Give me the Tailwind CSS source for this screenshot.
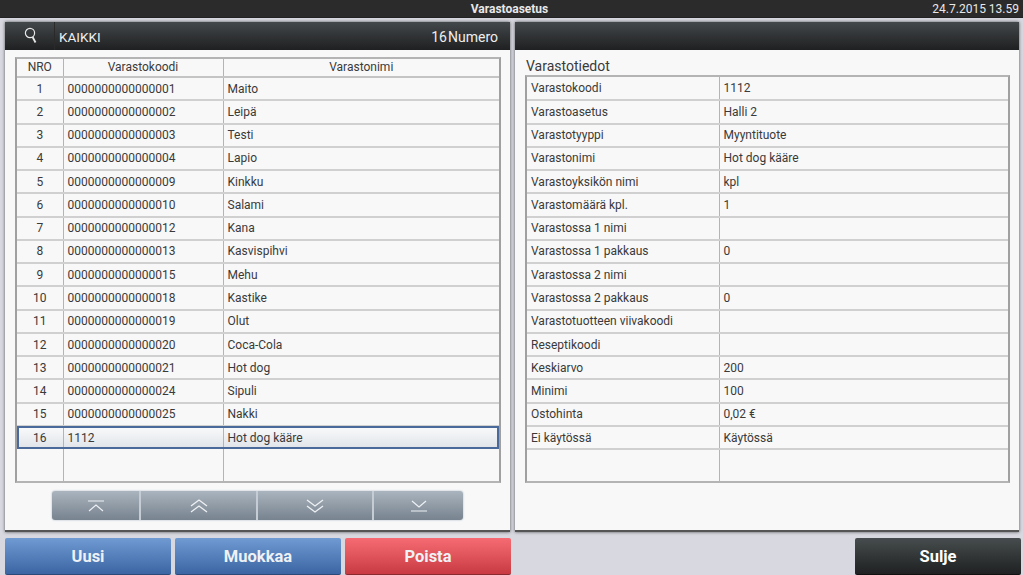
<!DOCTYPE html>
<html lang="fi">
  <head>
    <meta charset="UTF-8" />
    <title>Varastoasetus</title>
    <script src="https://cdn.jsdelivr.net/npm/@tailwindcss/browser@4"></script>
  </head>
  <body class="w-[1023px] h-[575px] overflow-hidden bg-[#d7d8e0] font-['Roboto',sans-serif] text-[#3a3a3a]">
    <header class="h-[18px] bg-[#2b2b2b] border-b border-[#222] grid grid-cols-[1fr_auto_1fr] items-center text-[12px] text-[#e8e8e8]">
      <span></span>
      <span class="font-bold -translate-x-[2px]">Varastoasetus</span>
      <span class="text-right pr-1">24.7.2015 13.59</span>
    </header>

    <main class="flex gap-[5px] pl-[5px] pt-[4px] h-[514px]">
      <!-- list -->
      <section class="w-[505px] h-[510px] bg-[#f8f8f8] border-b-2 border-b-[#555] shadow-[0_0_3px_#555] flex flex-col">
        <div class="h-[28px] shrink-0 bg-gradient-to-b from-[#43484a] to-[#1f2021] flex items-center text-[13.5px] text-[#eee]">
          <div class="w-[50px] h-full flex justify-center items-start pt-[5px] pl-[2px] border-r border-[#2a2a2a]">
            <svg width="14" height="17" viewBox="0 0 14 17" fill="none" stroke="#e8e8e8">
              <circle cx="6" cy="6" r="4.6" stroke-width="1.2" />
              <path d="M8.6 10 L11.5 15.5" stroke-width="1.8" />
            </svg>
          </div>
          <span class="ml-[4px] pt-[3px]">KAIKKI</span>
          <span class="ml-auto mr-[12px] pt-[3px] text-[14px]"><span class="mr-[1px]">16</span>Numero</span>
        </div>

        <div class="ml-[10px] mt-[7px] w-[486px] h-[426px] border-2 border-[#b4b4b4] border-x-[#a0a0a0] overflow-hidden">
          <table class="w-full table-fixed border-collapse text-[12px]">
            <colgroup><col class="w-[46px]" /><col class="w-[160px]" /><col /></colgroup>
            <thead>
              <tr class="border-b-2 border-[#c4c4c4] text-center leading-[17px]">
                <th class="font-normal border-r border-[#b4b4b4]">NRO</th>
                <th class="font-normal border-r border-[#b4b4b4]">Varastokoodi</th>
                <th class="font-normal">Varastonimi</th>
              </tr>
            </thead>
            <tbody id="list"></tbody>
          </table>
        </div>

        <div class="ml-[47px] mt-[8px] w-[411px] h-[29px] rounded-[3px] bg-gradient-to-b from-[#aab4be] to-[#77838f] flex shadow-[0_0_2px_#9fb0c0]">
          <button class="w-[89px] flex items-center justify-center border-r-2 border-[#c5ccd3]">
            <svg width="18" height="12" viewBox="0 0 18 12" fill="none" stroke="#eef1f4" stroke-width="1.2"><path d="M1 1H17M2 11L9 5L16 11" /></svg>
          </button>
          <button class="w-[117px] flex items-center justify-center border-r-2 border-[#c5ccd3]">
            <svg width="18" height="14" viewBox="0 0 18 14" fill="none" stroke="#eef1f4" stroke-width="1.3"><path d="M1 7L9 1L17 7M1 13L9 7L17 13" /></svg>
          </button>
          <button class="w-[116px] flex items-center justify-center border-r-2 border-[#c5ccd3]">
            <svg width="18" height="14" viewBox="0 0 18 14" fill="none" stroke="#eef1f4" stroke-width="1.3"><path d="M1 1L9 7L17 1M1 7L9 13L17 7" /></svg>
          </button>
          <button class="flex-1 flex items-center justify-center">
            <svg width="18" height="12" viewBox="0 0 18 12" fill="none" stroke="#eef1f4" stroke-width="1.2"><path d="M2 1L9 7L16 1M1 11H17" /></svg>
          </button>
        </div>
      </section>

      <!-- details -->
      <section class="w-[504px] h-[510px] bg-[#f8f8f8] border-b-2 border-b-[#555] shadow-[0_0_3px_#555] flex flex-col">
        <div class="h-[28px] shrink-0 bg-gradient-to-b from-[#43484a] to-[#1f2021]"></div>
        <h2 class="ml-[11px] mt-[8px] h-[17px] text-[14px] leading-[17px]">Varastotiedot</h2>
        <div class="ml-[10px] h-[408px] w-[485px] border-2 border-[#b4b4b4] border-x-[#a0a0a0] overflow-hidden">
          <table class="w-full table-fixed border-collapse text-[12px]">
            <colgroup><col class="w-[192px]" /><col /></colgroup>
            <tbody id="details"></tbody>
          </table>
        </div>
      </section>
    </main>

    <footer class="flex pl-[5px] pr-[2px] gap-[4px] mt-[6px] h-[37px] text-[16.5px] font-bold text-[#eef1f5]">
      <button class="w-[166px] pt-[2px] rounded-[2px] border-b border-[#2c4a78] bg-gradient-to-b from-[#6f9ad2] to-[#3c66a3]">Uusi</button>
      <button class="w-[166px] pt-[2px] rounded-[2px] border-b border-[#2c4a78] bg-gradient-to-b from-[#6f9ad2] to-[#3c66a3]">Muokkaa</button>
      <button class="w-[166px] pt-[2px] rounded-[2px] border-b border-[#8a2a30] bg-gradient-to-b from-[#f66b73] to-[#c93a42]">Poista</button>
      <button class="ml-auto w-[166px] pt-[2px] rounded-[2px] border-b border-[#111] bg-gradient-to-b from-[#474d4e] to-[#1f2122] text-white">Sulje</button>
    </footer>

    <script>
      const items = [
        ["0000000000000001", "Maito"], ["0000000000000002", "Leipä"], ["0000000000000003", "Testi"],
        ["0000000000000004", "Lapio"], ["0000000000000009", "Kinkku"], ["0000000000000010", "Salami"],
        ["0000000000000012", "Kana"], ["0000000000000013", "Kasvispihvi"], ["0000000000000015", "Mehu"],
        ["0000000000000018", "Kastike"], ["0000000000000019", "Olut"], ["0000000000000020", "Coca-Cola"],
        ["0000000000000021", "Hot dog"], ["0000000000000024", "Sipuli"], ["0000000000000025", "Nakki"],
        ["1112", "Hot dog kääre"],
      ];
      const info = [
        ["Varastokoodi", "1112"], ["Varastoasetus", "Halli 2"], ["Varastotyyppi", "Myyntituote"],
        ["Varastonimi", "Hot dog kääre"], ["Varastoyksikön nimi", "kpl"], ["Varastomäärä kpl.", "1"],
        ["Varastossa 1 nimi", ""], ["Varastossa 1 pakkaus", "0"], ["Varastossa 2 nimi", ""],
        ["Varastossa 2 pakkaus", "0"], ["Varastotuotteen viivakoodi", ""], ["Reseptikoodi", ""],
        ["Keskiarvo", "200"], ["Minimi", "100"], ["Ostohinta", "0,02 €"], ["Ei käytössä", "Käytössä"],
      ];

      document.getElementById("list").innerHTML = items.map((it, i) => {
        const selected = i === items.length - 1;
        const rowClass = selected
          ? "h-[23.27px] bg-gradient-to-b from-[#fafbfc] to-[#dfe3e8] outline-2 -outline-offset-2 outline-[#4a6a9c]"
          : "h-[23.27px] border-b-2 border-[#d0d0d0]";
        return `<tr class="${rowClass}">
          <td class="text-center border-r border-[#b4b4b4]">${i + 1}</td>
          <td class="pl-[4px] border-r border-[#b4b4b4]">${it[0]}</td>
          <td class="pl-[4px]">${it[1]}</td>
        </tr>`;
      }).join("") + `<tr class="h-[36px]"><td class="border-r border-[#b4b4b4]"></td><td class="border-r border-[#b4b4b4]"></td><td></td></tr>`;

      document.getElementById("details").innerHTML = info.map((it) => `<tr class="h-[23.27px] border-b-2 border-[#d0d0d0]">
          <td class="pl-[4px] border-r border-[#b4b4b4]">${it[0]}</td>
          <td class="pl-[4px]">${it[1]}</td>
        </tr>`).join("") + `<tr class="h-[33px]"><td class="border-r border-[#b4b4b4]"></td><td></td></tr>`;
    </script>
  </body>
</html>
